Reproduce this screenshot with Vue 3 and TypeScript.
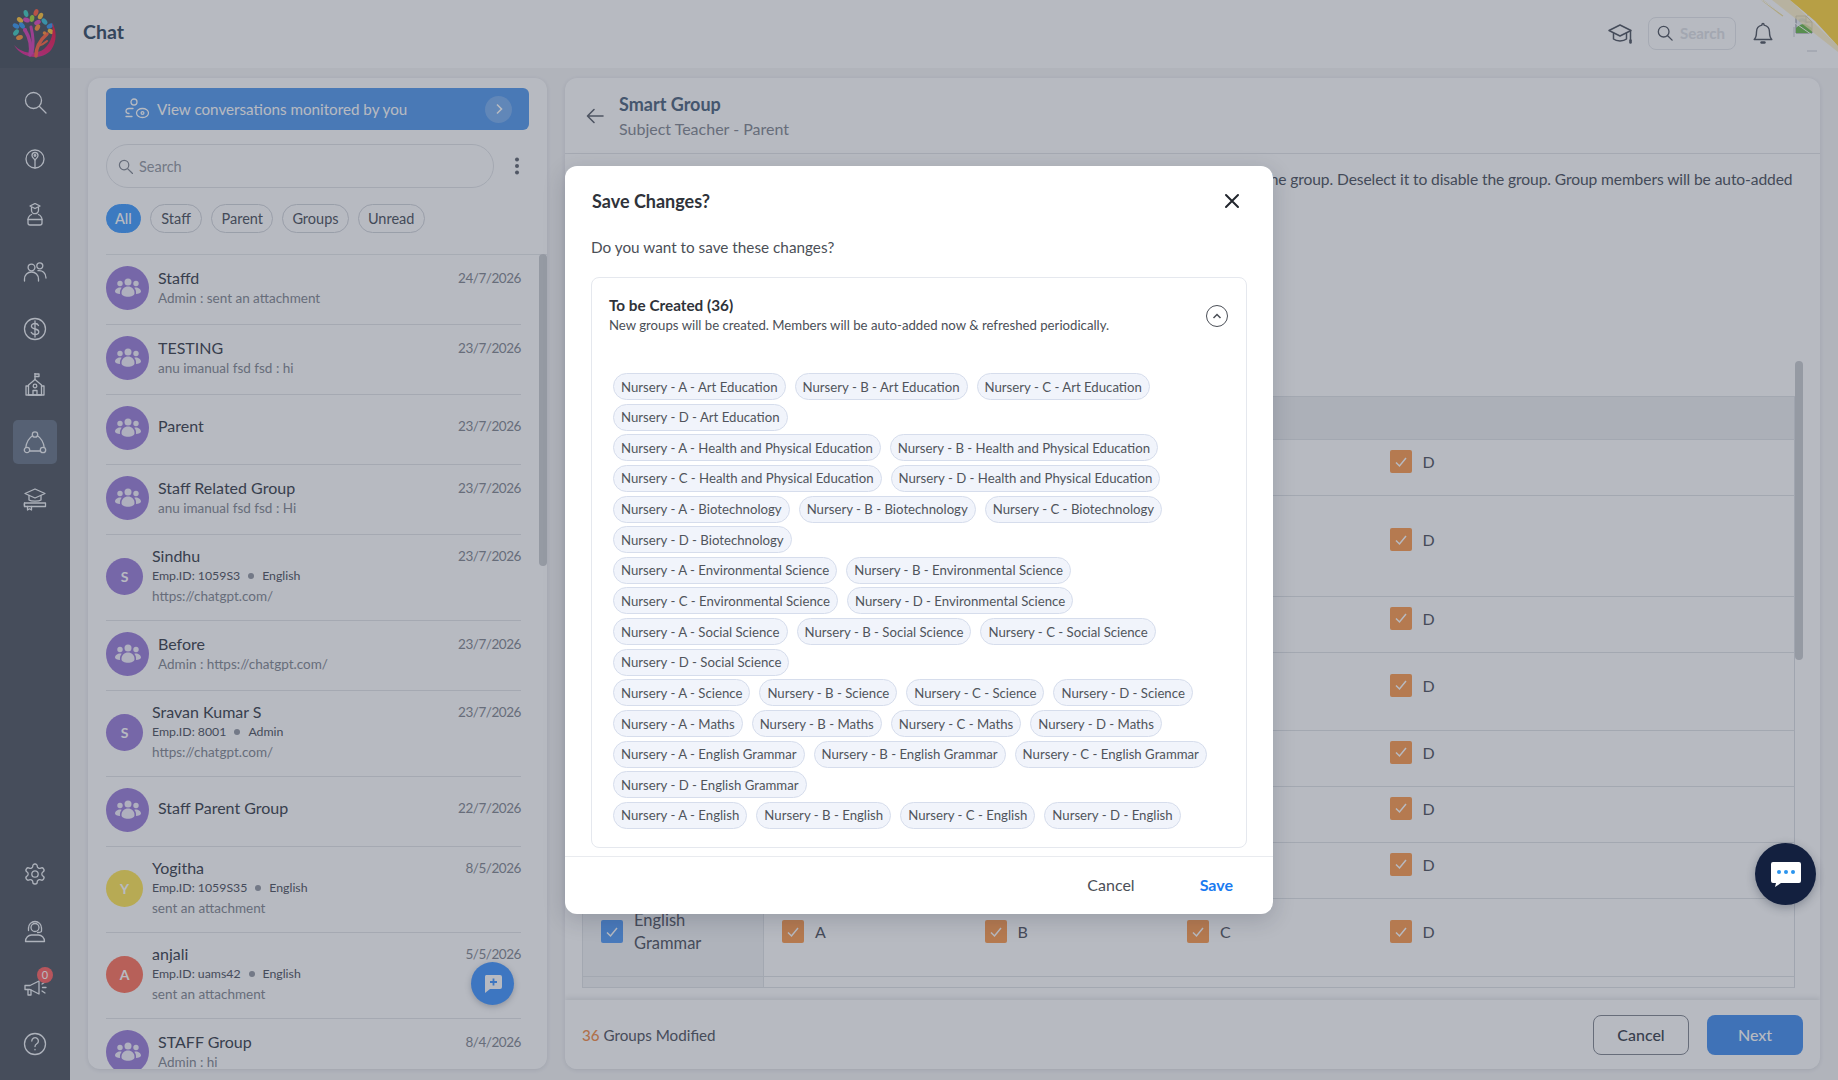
<script setup lang="ts">
const c = (x: number, y: number, r: number) => `M${x - r} ${y}a${r} ${r} 0 1 0 ${2 * r} 0a${r} ${r} 0 1 0 ${-2 * r} 0`

const topNav: { paths: string[]; active?: boolean }[] = [
  { paths: [c(10.5, 10.5, 8), 'M16.5 16.5L23 23'] },
  { paths: [c(12, 12, 9), 'M12 21V13', 'M9 8.5a3 3 0 0 1 6 0c0 2-2 3-3 4.5c-1-1.5-3-2.500-3-4.5z', c(12, 8.5, .8)] },
  { paths: ['M12 .5L17 3L12 5.500L7 3z', 'M8.5 4.500v2.700a3.500 3.500 0 0 0 7 0V4.500', 'M8.600 11.500c-2.300 1-3.600 3-3.600 5.500v3c0 1.200.8 2 2 2h10c1.200 0 2-.8 2-2v-3c0-2.500-1.300-4.500-3.600-5.500', 'M5 16.500h14'] },
  { paths: [c(8.5, 7.5, 3.4), c(16.8, 5.8, 3), 'M1.500 21v-2c0-4 3-7 7-7s7 3 7 7v2', 'M15 10.700c4.500-.6 8 2.300 8 7.300'] },
  { paths: [c(12, 12, 10.500), 'M15.500 8.500c-.6-1.300-2-2-3.500-2c-2 0-3.600 1-3.600 2.700c0 3.800 7.400 1.800 7.400 5.600c0 1.700-1.700 2.700-3.800 2.700c-1.700 0-3.200-.8-3.800-2.200', 'M12 4v16'] },
  { paths: ['M12 .5v6', 'M12 1h4v2.500h-4', 'M12 6.500l6.500 5.500v10h-13V12z', 'M3 13h2.500M18.500 13h2.500v9H3v-9', c(12, 13, 1.800), 'M10 22v-4.500h4V22'] },
  { paths: [c(12, 4.500, 2.700), c(4, 20, 2.700), c(20, 20, 2.700), 'M9.500 5.700C6 8 3.500 12 2.800 17.500', 'M14.500 5.700C18 8 20.500 12 21.200 17.500', 'M6.700 21h10.600'], active: true },
  { paths: ['M12 2L2 6.500L12 11L22 6.500z', 'M6 8.500V13c2 1.500 10 1.500 12 0V8.500', 'M1.500 16h21v3.500h-21z', 'M1.500 16c-.5 1 0 2.500 0 3.500', 'M4.500 19.500V23l2-1.200l2 1.200v-3.500'] },
]
const bottomNav: { paths: string[]; badge?: string }[] = [
  { paths: ['M12.220 2h-.44a2 2 0 0 0-2 2v.18a2 2 0 0 1-1 1.730l-.43.25a2 2 0 0 1-2 0l-.15-.08a2 2 0 0 0-2.730.73l-.22.38a2 2 0 0 0 .73 2.730l.15.1a2 2 0 0 1 1 1.720v.51a2 2 0 0 1-1 1.740l-.15.09a2 2 0 0 0-.73 2.730l.22.38a2 2 0 0 0 2.730.73l.15-.08a2 2 0 0 1 2 0l.43.25a2 2 0 0 1 1 1.730V20a2 2 0 0 0 2 2h.44a2 2 0 0 0 2-2v-.18a2 2 0 0 1 1-1.730l.43-.25a2 2 0 0 1 2 0l.15.08a2 2 0 0 0 2.730-.73l.22-.39a2 2 0 0 0-.73-2.730l-.15-.08a2 2 0 0 1-1-1.740v-.5a2 2 0 0 1 1-1.740l.15-.09a2 2 0 0 0 .73-2.730l-.22-.38a2 2 0 0 0-2.730-.73l-.15.08a2 2 0 0 1-2 0l-.43-.25a2 2 0 0 1-1-1.730V4a2 2 0 0 0-2-2z', c(12, 12, 3.200)] },
  { paths: [c(12, 8.500, 4), 'M5.500 9a6.500 6.500 0 0 1 13 0', 'M5.500 9v2.500M18.500 9v3c0 1-1 1.500-4 1.500', 'M2.500 22.500c0-4 3-6.500 6-6.500h7c3 0 6 2.500 6 6.500z'] },
  { paths: ['M2 10.500h5L16 6v13l-9-4.500H2z', 'M5 14.500V20h3v-5', 'M19 9l3-2M19.500 12.500H23M19 16l3 2'], badge: '0' },
  { paths: [c(12, 12, 10.500), 'M8.800 9a3.300 3.300 0 1 1 5 2.800c-1.100.7-1.800 1.400-1.800 2.700', 'M12 17.500v.3'] },
]

type Conv = { name: string; date: string; sub: string; kind: 'group' | 'person'; meta?: [string, string]; letter?: string; tone?: string }
const conversations: Conv[] = [
  { name: 'Staffd', date: '24/7/2026', sub: 'Admin : sent an attachment', kind: 'group' },
  { name: 'TESTING', date: '23/7/2026', sub: 'anu imanual fsd fsd : hi', kind: 'group' },
  { name: 'Parent', date: '23/7/2026', sub: '', kind: 'group' },
  { name: 'Staff Related Group', date: '23/7/2026', sub: 'anu imanual fsd fsd : Hi', kind: 'group' },
  { name: 'Sindhu', date: '23/7/2026', sub: 'https://chatgpt.com/', kind: 'person', meta: ['Emp.ID: 1059S3', 'English'], letter: 'S', tone: 'purple' },
  { name: 'Before', date: '23/7/2026', sub: 'Admin : https://chatgpt.com/', kind: 'group' },
  { name: 'Sravan Kumar S', date: '23/7/2026', sub: 'https://chatgpt.com/', kind: 'person', meta: ['Emp.ID: 8001', 'Admin'], letter: 'S', tone: 'purple' },
  { name: 'Staff Parent Group', date: '22/7/2026', sub: '', kind: 'group' },
  { name: 'Yogitha', date: '8/5/2026', sub: 'sent an attachment', kind: 'person', meta: ['Emp.ID: 1059S35', 'English'], letter: 'Y', tone: 'yellow' },
  { name: 'anjali', date: '5/5/2026', sub: 'sent an attachment', kind: 'person', meta: ['Emp.ID: uams42', 'English'], letter: 'A', tone: 'red' },
  { name: 'STAFF Group', date: '8/4/2026', sub: 'Admin : hi', kind: 'group' },
]

const filters = ['All', 'Staff', 'Parent', 'Groups', 'Unread']
const subjects = ['Art Education', 'Health and Physical Education', 'Biotechnology', 'Environmental Science', 'Social Science', 'Science', 'Maths', 'English Grammar']
const sections = ['A', 'B', 'C', 'D']

const chipSpec: [string, string][] = [
  ['Art Education', 'ABC'], ['Art Education', 'D'],
  ['Health and Physical Education', 'AB'], ['Health and Physical Education', 'CD'],
  ['Biotechnology', 'ABC'], ['Biotechnology', 'D'],
  ['Environmental Science', 'AB'], ['Environmental Science', 'CD'],
  ['Social Science', 'ABC'], ['Social Science', 'D'],
  ['Science', 'ABCD'], ['Maths', 'ABCD'],
  ['English Grammar', 'ABC'], ['English Grammar', 'D'],
  ['English', 'ABCD'],
]
const chipRows = chipSpec.map(([s, secs]) => secs.split('').map((x) => `Nursery - ${x} - ${s}`))

const leaves: [number, number, string, number][] = [
  [26, 13.500, '#4fd0c4', -15], [36, 12.500, '#ff6a50', 20], [20, 20, '#ffc94a', -50], [32, 18.500, '#a8dc4a', 10],
  [40.500, 16, '#ffc94a', 30], [26.500, 20, '#e058c0', -70], [44.500, 21.500, '#4cc4dc', -40], [37.500, 22.500, '#e058c0', 60],
  [16, 26, '#48a0f0', -60], [50, 26, '#48a0f0', 60], [22, 25.500, '#48a0f0', -40], [37.500, 27.500, '#ff9848', 30],
  [16, 32.500, '#4fd0c4', 40], [19.500, 37.500, '#ff9c48', 70], [51, 31.500, '#ffc94a', -60],
]
</script>

<template>
  <div class="app">
    <aside class="rail">
      <div class="logo">
        <svg width="70" height="68" viewBox="0 0 70 68">
          <defs>
            <linearGradient id="crescent" x1="0" y1="1" x2="1" y2="0">
              <stop offset="0" stop-color="#e040b0" />
              <stop offset="1" stop-color="#f02848" />
            </linearGradient>
          </defs>
          <ellipse v-for="(l, i) in leaves" :key="i" :cx="l[0]" :cy="l[1]" rx="2.300" ry="3.500" :fill="l[2]" :transform="`rotate(${l[3]} ${l[0]} ${l[1]})`" />
          <path d="M14 45C22 59 42 61 51 50C57 42 57 30 52 23C54 32 52 42 44 49C36 55 22 54 14 45z" fill="url(#crescent)" />
          <g fill="none" stroke-linecap="round">
            <path d="M30 55C32 45 30 38 25 30" stroke="#d850b8" stroke-width="3.500" />
            <path d="M32 53C34 44 33 35 31 27" stroke="#d850b8" stroke-width="3" />
            <path d="M36 56C36 46 40 40 47 34" stroke="#ff7050" stroke-width="3.500" />
            <path d="M38 46C41 45 44 44 47 41" stroke="#ff7050" stroke-width="2" />
          </g>
          <circle cx="25" cy="30" r="2" fill="#d850b8" />
          <circle cx="44.500" cy="33" r="1.800" fill="#ff9848" />
        </svg>
      </div>
      <nav class="rail-nav">
        <div class="rail-group">
          <div v-for="(n, i) in topNav" :key="i" class="rail-item" :class="{ active: n.active }">
            <svg width="24" height="24" viewBox="0 0 24 24" class="rail-icon"><path v-for="(d, j) in n.paths" :key="j" :d="d" /></svg>
          </div>
        </div>
        <div class="rail-group">
          <div v-for="(n, i) in bottomNav" :key="i" class="rail-item">
            <svg width="24" height="24" viewBox="0 0 24 24" class="rail-icon"><path v-for="(d, j) in n.paths" :key="j" :d="d" /></svg>
            <span v-if="n.badge" class="rail-badge">{{ n.badge }}</span>
          </div>
        </div>
      </nav>
    </aside>

    <div class="main">
      <header class="topbar">
        <h1 class="page-title">Chat</h1>
        <div class="top-tools">
          <svg width="26" height="24" viewBox="0 0 26 24" class="tool-icon">
            <path d="M13 4L2 9.500L13 15L24 9.500z" />
            <path d="M6.500 12.500V18c3 2.500 10 2.500 13 0v-5.500" />
            <path d="M23.500 10v10" />
            <path d="M23.500 19.500v2" stroke-width="2.600" />
          </svg>
          <div class="top-search">
            <svg width="16" height="16" viewBox="0 0 18 18" class="tool-icon"><circle cx="7.500" cy="7.500" r="6" /><path d="M12 12l5 5" /></svg>
            <span>Search</span>
          </div>
          <svg width="20" height="24" viewBox="0 0 20 24" class="tool-icon bell">
            <path d="M10 2.500a1 1 0 0 1 1 1v.6c3.300.6 5.500 3.300 5.500 6.900c0 4 .8 6 2.300 7.500H1.200C2.700 17 3.500 15 3.500 11c0-3.600 2.200-6.300 5.500-6.900v-.6a1 1 0 0 1 1-1z" />
            <path d="M8.500 21.500h3" stroke-width="2.400" />
          </svg>
          <svg class="avatar-slot" width="38" height="38" viewBox="0 0 38 38">
            <path d="M14 1h10M1 13v10M37 13v10M14 37h10" stroke="#cfd2d8" fill="none" />
            <g transform="translate(2 1)">
              <path d="M1 1h10l6 6v11H1z" fill="#eef1f6" stroke="#8f96a0" />
              <path d="M1 13c4-4 8-5 11-3l5 3v5H1z" fill="#78c05c" />
              <path d="M4 6c3-2 6-1 8 2" stroke="#a8c8ee" stroke-width="3" fill="none" />
              <path d="M11 1v6h6z" fill="#fff" stroke="#8f96a0" />
            </g>
          </svg>
        </div>
        <svg class="corner" width="90" height="56" viewBox="0 0 90 56">
          <path d="M24 0H42L90 46V52z" fill="#fff0c0" opacity=".75" />
          <path d="M42 0H90V46L67 21z" fill="#ffd94e" />
          <path d="M14 0L35 16" stroke="#f5e6a6" stroke-width="1.500" />
          <path d="M14 0L90 53" stroke="#fff" stroke-width="1" />
        </svg>
      </header>

      <div class="content">
        <section class="list-card">
          <div class="monitor">
            <svg width="26" height="24" viewBox="0 0 26 24" class="monitor-icon">
              <circle cx="10" cy="5" r="3" />
              <path d="M9 11.500H5c-2 0-3 1.200-3 2.500s1 2.500 3 2.500M2 19.500h6" />
              <ellipse cx="18.500" cy="16" rx="6" ry="4.500" />
              <circle cx="18.500" cy="16" r="1.400" />
            </svg>
            <span class="monitor-text">View conversations monitored by you</span>
            <span class="monitor-go">
              <svg width="10" height="12" viewBox="0 0 10 12"><path d="M3 1.500L7.500 6L3 10.500" fill="none" stroke="currentColor" stroke-width="1.600" /></svg>
            </span>
          </div>

          <div class="search-row">
            <div class="search">
              <svg width="15" height="15" viewBox="0 0 16 16" class="search-icon"><circle cx="6.500" cy="6.500" r="5" /><path d="M10.500 10.500l5 5" /></svg>
              <span>Search</span>
            </div>
            <svg width="6" height="18" viewBox="0 0 6 18" class="kebab"><circle cx="3" cy="2.500" r="2" /><circle cx="3" cy="9" r="2" /><circle cx="3" cy="15.500" r="2" /></svg>
          </div>

          <div class="filters">
            <span v-for="(f, i) in filters" :key="f" class="filter" :class="{ on: i === 0 }">{{ f }}</span>
          </div>

          <div class="list">
            <div v-for="(cv, i) in conversations" :key="i" class="row" :class="[cv.kind, { solo: !cv.sub }]">
              <div class="avatar" :class="cv.tone ?? 'purple'">
                <svg v-if="cv.kind === 'group'" width="26" height="22" viewBox="0 0 26 22" class="group-icon">
                  <circle cx="13" cy="5" r="3.500" />
                  <circle cx="5" cy="6.500" r="2.700" />
                  <circle cx="21" cy="6.500" r="2.700" />
                  <path d="M6.500 16c0-4 3-6.500 6.500-6.500s6.500 2.500 6.500 6.500c0 2.500-3 3.800-6.500 3.800S6.500 18.500 6.500 16z" />
                  <path d="M5.200 10.500C2.500 10.500 0 12.300 0 14.500c0 1.500 2.500 2.500 5 2.500c-.2-2.500 0-4.500 1.700-6.300c-.5-.1-1-.2-1.500-.2z" />
                  <path d="M20.800 10.500c2.700 0 5.200 1.800 5.200 4c0 1.500-2.500 2.500-5 2.500c.2-2.500 0-4.500-1.700-6.300c.5-.1 1-.2 1.500-.2z" />
                </svg>
                <span v-else>{{ cv.letter }}</span>
              </div>
              <div class="row-body">
                <div class="row-top">
                  <span class="row-name">{{ cv.name }}</span>
                  <span class="row-date">{{ cv.date }}</span>
                </div>
                <div v-if="cv.meta" class="row-meta">
                  <span>{{ cv.meta[0] }}</span><i class="dot"></i><span>{{ cv.meta[1] }}</span>
                </div>
                <div v-if="cv.sub" class="row-sub">{{ cv.sub }}</div>
              </div>
            </div>
            <span class="thumb list-thumb"></span>
          </div>

          <button class="fab" type="button">
            <svg width="20" height="20" viewBox="0 0 20 20">
              <path d="M3 1h14a2 2 0 0 1 2 2v10a2 2 0 0 1-2 2H7l-5 4V3a2 2 0 0 1 1-2z" fill="#fff" />
              <path d="M10.500 4.500v7M7 8h7" stroke="#519eff" stroke-width="1.800" />
            </svg>
          </button>
        </section>

        <section class="detail-card">
          <div class="detail-head">
            <svg width="20" height="18" viewBox="0 0 20 18" class="back"><path d="M18 9H3M9 2.500L2.500 9L9 15.500" /></svg>
            <div>
              <div class="detail-title">Smart Group</div>
              <div class="detail-sub">Subject Teacher - Parent</div>
            </div>
          </div>
          <p class="desc">Select any subject and the sections listed in the tables below to enable the matching groups and keep the group. Deselect it to disable the group. Group members will be auto-added<br />now and refreshed periodically.</p>

          <div class="matrix">
            <div class="matrix-head">
              <div class="cell-subject">Subject</div>
              <div class="cell-sections">Sections</div>
            </div>
            <div v-for="s in subjects" :key="s" class="matrix-row">
              <div class="cell-subject">
                <span class="check blue"><svg width="16" height="16" viewBox="0 0 16 16"><path d="M3 8.500L6.500 12L13 4" /></svg></span>
                <span class="subject-name">{{ s }}</span>
              </div>
              <div class="cell-sections">
                <div v-for="x in sections" :key="x" class="section">
                  <span class="check orange"><svg width="16" height="16" viewBox="0 0 16 16"><path d="M3 8.500L6.500 12L13 4" /></svg></span>
                  <span>{{ x }}</span>
                </div>
              </div>
            </div>
            <div class="matrix-row tail">
              <div class="cell-subject"></div>
              <div class="cell-sections"></div>
            </div>
            <span class="thumb matrix-thumb"></span>
          </div>

          <div class="detail-foot">
            <div class="modified"><b>36</b> Groups Modified</div>
            <div class="foot-btns">
              <button class="btn ghost" type="button">Cancel</button>
              <button class="btn solid" type="button">Next</button>
            </div>
          </div>
        </section>
      </div>
    </div>

    <div class="scrim">
      <div class="modal">
        <div class="modal-head">
          <h2>Save Changes?</h2>
          <svg width="16" height="16" viewBox="0 0 16 16" class="close"><path d="M2 2l12 12M14 2L2 14" /></svg>
        </div>
        <p class="modal-q">Do you want to save these changes?</p>
        <div class="created">
          <div class="created-head">
            <div>
              <div class="created-title">To be Created (36)</div>
              <div class="created-sub">New groups will be created. Members will be auto-added now &amp; refreshed periodically.</div>
            </div>
            <span class="collapse">
              <svg width="10" height="8" viewBox="0 0 10 8"><path d="M1.500 6L5 2.500L8.500 6" /></svg>
            </span>
          </div>
          <div class="chips">
            <div v-for="(r, i) in chipRows" :key="i" class="chip-row">
              <span v-for="t in r" :key="t" class="chip">{{ t }}</span>
            </div>
          </div>
        </div>
        <div class="modal-foot">
          <button class="link" type="button">Cancel</button>
          <button class="link primary" type="button">Save</button>
        </div>
      </div>
    </div>

    <button class="helper" type="button">
      <svg width="32" height="27" viewBox="0 0 32 27">
        <path d="M3 1h26a2 2 0 0 1 2 2v17a2 2 0 0 1-2 2H11l-6 4l1-4H3a2 2 0 0 1-2-2V3a2 2 0 0 1 2-2z" fill="#fff" />
        <circle cx="9" cy="11" r="2" fill="#2b94ee" />
        <circle cx="16" cy="11" r="2" fill="#2b94ee" />
        <circle cx="23" cy="11" r="2" fill="#2b94ee" />
      </svg>
    </button>
  </div>
</template>

<style>
html, body { margin: 0; padding: 0; }
</style>

<style scoped>
* { box-sizing: border-box; }
.app {
  position: relative;
  display: flex;
  width: 1838px;
  height: 1080px;
  overflow: hidden;
  background: #f6f6f7;
  font-family: "Lato", "Noto Sans", sans-serif;
  color: #4a4f5a;
}
button { font-family: inherit; }

.rail { width: 70px; flex: none; display: flex; flex-direction: column; background: #5d646e; }
.logo { height: 68px; flex: none; background: #575e68; }
.logo svg { display: block; }
.rail-nav { flex: 1; display: flex; flex-direction: column; justify-content: space-between; padding: 12px 0 14px; }
.rail-group { display: flex; flex-direction: column; gap: 12.700px; align-items: center; }
.rail-item { position: relative; width: 44px; height: 44px; display: flex; align-items: center; justify-content: center; border-radius: 5px; }
.rail-item.active { background: #748091; }
.rail-icon { fill: none; stroke: #f2f4f7; stroke-width: 1.300; stroke-linecap: round; stroke-linejoin: round; }
.rail-badge {
  position: absolute; top: 2px; right: 4px; width: 16px; height: 16px; border-radius: 50%;
  background: #ff6f6f; color: #fff; font-size: 11px; line-height: 16px; text-align: center;
}

.main { flex: 1; min-width: 0; display: flex; flex-direction: column; }
.topbar { position: relative; height: 68px; flex: none; display: flex; align-items: center; justify-content: space-between; background: #fff; padding: 0 7px 0 13px; }
.page-title { margin: 0 0 6px; font-size: 19.500px; font-weight: 700; color: #45596f; }
.top-tools { display: flex; align-items: center; margin-bottom: 2px; }
.tool-icon { fill: none; stroke: #5e636d; stroke-width: 1.500; stroke-linecap: round; stroke-linejoin: round; }
.top-search {
  width: 88px; height: 33px; margin-left: 15px; display: flex; align-items: center; gap: 7px; padding: 0 8px;
  border: 1px solid #e7e9ec; border-radius: 8px; color: #e2e4e8; font-size: 15px; font-weight: 700;
}
.bell { margin-left: 17px; stroke-width: 1.400; }
.avatar-slot { margin-left: 20px; display: block; }
.corner { position: absolute; top: 0; right: 0; }

.content { flex: 1; min-height: 0; display: flex; gap: 18px; padding: 10px 18px 11px; }

.list-card {
  position: relative; width: 459px; flex: none; display: flex; flex-direction: column; padding: 10px 0 0 18px;
  background: #fff; border-radius: 12px; overflow: hidden; box-shadow: 0 1px 4px rgba(20, 30, 50, .1);
}
.monitor {
  width: 423px; height: 42px; flex: none; display: flex; align-items: center; padding: 0 17px 0 18px;
  background: #62a2ef; border-radius: 6px; color: #fff;
}
.monitor-icon { fill: none; stroke: #fff; stroke-width: 1.300; stroke-linecap: round; }
.monitor-text { flex: 1; margin-left: 7px; font-size: 15.200px; }
.monitor-go { width: 27px; height: 27px; display: flex; align-items: center; justify-content: center; border-radius: 50%; background: rgba(255, 255, 255, .22); }

.search-row { display: flex; align-items: center; margin-top: 14px; height: 44px; flex: none; }
.search {
  width: 388px; height: 44px; display: flex; align-items: center; gap: 6px; padding: 0 0 0 11px;
  border: 1px solid #e4e6e9; border-radius: 22px; color: #9ca1a9; font-size: 14.500px;
}
.search-icon { fill: none; stroke: #8c919a; stroke-width: 1.300; stroke-linecap: round; }
.kebab { margin-left: 20px; fill: #6d727c; }

.filters { display: flex; gap: 9px; margin-top: 16px; flex: none; }
.filter {
  height: 29px; padding: 0 9.200px; display: flex; align-items: center; border: 1px solid #d5d8dd; border-radius: 15px;
  font-size: 14.500px; color: #5a5f6a;
}
.filter:nth-child(2) { padding: 0 10.500px; }
.filter.on { padding: 0 8px; background: #50a4ff; border-color: #50a4ff; color: #fff; font-weight: 500; }

.list { position: relative; flex: 1; min-height: 0; margin-top: 21px; border-top: 1px solid #e9ebed; padding-right: 26px; }
.row { display: flex; align-items: center; border-bottom: 1px solid #e5e7ea; }
.row.group { height: 70px; }
.row.person { height: 86px; }
.avatar { flex: none; display: flex; align-items: center; justify-content: center; border-radius: 50%; color: #fff; font-weight: 700; font-size: 14px; }
.group .avatar { width: 43px; height: 44px; margin-top: -3px; }
.person .avatar { width: 37px; height: 37px; margin-top: -2px; }
.purple { background: #a388dc; }
.yellow { background: #ffe864; }
.red { background: #ff7f6b; }
.group-icon { fill: #f4f1fb; }
.row-body { flex: 1; min-width: 0; padding-left: 9px; margin-top: -4px; }
.row.solo .row-body { margin-top: -8px; }
.row-top { display: flex; justify-content: space-between; align-items: center; }
.row-name { font-size: 16px; line-height: 21px; color: #4a4f5a; }
.row-date { font-size: 13.500px; letter-spacing: -.45px; color: #8d919a; }
.row-meta { display: flex; align-items: center; font-size: 12.300px; line-height: 20px; color: #5c616c; }
.dot { width: 6px; height: 6px; margin: 0 8px; border-radius: 50%; background: #9ea2ac; }
.row-sub { font-size: 13.500px; line-height: 20px; color: #8d919a; }

.thumb { position: absolute; width: 8px; border-radius: 4px; background: #cfd1d5; }
.list-thumb { top: -1px; right: 0; height: 312px; }
.fab {
  position: absolute; left: 383px; top: 884px; width: 43px; height: 43px; padding: 0; display: flex; align-items: center; justify-content: center;
  border: none; border-radius: 50%; background: #519eff; box-shadow: 0 2px 6px rgba(20, 30, 50, .25);
}

.detail-card { position: relative; flex: 1; min-width: 0; display: flex; flex-direction: column; background: #fff; border-radius: 12px; overflow: hidden; box-shadow: 0 1px 4px rgba(20, 30, 50, .1); }
.detail-head { height: 76px; flex: none; display: flex; align-items: center; gap: 14px; padding: 0 20px; border-bottom: 1px solid #e5e7ea; }
.back { fill: none; stroke: #6a6f79; stroke-width: 1.600; stroke-linecap: round; stroke-linejoin: round; }
.detail-title { font-size: 18px; line-height: 26px; font-weight: 700; color: #5b7088; }
.detail-sub { font-size: 16px; line-height: 24px; color: #8d919a; }
.desc { margin: 14px 8px 0 16px; height: 46px; flex: none; font-size: 15.600px; letter-spacing: -.1px; line-height: 23px; color: #5a5f6a; overflow: hidden; white-space: nowrap; }

.matrix { position: relative; flex: 1; min-height: 0; margin: 147px 0 0 17px; padding-top: 35px; overflow: hidden; }
.matrix-head, .matrix-row { display: flex; width: 1213px; border-right: 1px solid #dfe1e5; }
.matrix-head { height: 44px; background: #f0f1f3; border-top: 1px solid #e3e5e8; border-bottom: 1px solid #e3e5e8; font-size: 15px; }
.matrix-head > div { display: flex; align-items: center; padding: 0 18px; background: none; }
.matrix-row { border-bottom: 1px solid #e3e5e8; }
.cell-subject { width: 182px; flex: none; display: flex; align-items: center; gap: 11px; padding: 10px 22px 22px 18px; background: #f4f5f6; border-left: 1px solid #e3e5e8; border-right: 1px solid #e3e5e8; }
.subject-name { font-size: 16.500px; line-height: 22.600px; color: #5d626c; }
.cell-sections { flex: 1; display: flex; align-items: center; padding: 10px 0 22px 18px; }
.section { width: 202.500px; display: flex; align-items: center; gap: 11px; font-size: 16px; color: #5d626c; }
.check { flex: none; width: 22px; height: 23px; display: flex; align-items: center; justify-content: center; border-radius: 2px; }
.check svg { fill: none; stroke: #fff; stroke-width: 1.500; }
.check.blue { background: #62a4f6; }
.check.orange { background: #fda45e; }
.tail .cell-subject, .tail .cell-sections { padding: 0; height: 10px; }
.matrix-thumb { top: 0; right: 17.500px; height: 299px; }

.detail-foot { height: 69px; flex: none; display: flex; align-items: center; justify-content: space-between; padding: 0 17px; margin-top: 12px; background: #fff; box-shadow: 0 -2px 5px rgba(20, 30, 50, .1); }
.modified { font-size: 15.200px; color: #5d626c; }
.modified b { font-weight: 500; color: #f59556; }
.foot-btns { display: flex; gap: 18px; }
.btn { width: 96px; height: 40px; border-radius: 8px; font-size: 16px; font-weight: 500; padding: 0; }
.btn.ghost { background: #fff; border: 1px solid #8d919a; color: #4a4f5a; }
.btn.solid { background: #5398f1; border: none; color: #fff; }

.scrim { position: absolute; inset: 0; display: flex; align-items: center; justify-content: center; background: rgba(17, 25, 50, .3); }
.modal { width: 708px; height: 748px; display: flex; flex-direction: column; background: #fff; border-radius: 12px; color: #3f434b; box-shadow: 0 6px 22px rgba(20, 30, 50, .18); }
.modal-head { display: flex; align-items: center; justify-content: space-between; padding: 23px 33px 0 27px; }
.modal-head h2 { margin: 0; font-size: 18px; line-height: 24px; font-weight: 700; color: #2f333a; }
.close { fill: none; stroke: #22262d; stroke-width: 2; stroke-linecap: round; }
.modal-q { margin: 23px 26px 0; font-size: 15.300px; line-height: 22px; color: #4b4f57; }
.created { margin: 19px 26px 0; height: 571px; border: 1px solid #e5e8ee; border-radius: 8px; padding: 17px 17px 0 17px; flex: none; }
.created-head { display: flex; justify-content: space-between; align-items: center; padding-right: 1px; }
.created-title { font-size: 15.300px; line-height: 20px; font-weight: 700; color: #2f333a; }
.created-sub { font-size: 13.200px; line-height: 21px; color: #4b4f57; }
.collapse { width: 22px; height: 22px; display: flex; align-items: center; justify-content: center; border: 1px solid #4b4f57; border-radius: 50%; }
.collapse svg { fill: none; stroke: #4b4f57; stroke-width: 1.500; }
.chips { display: flex; flex-direction: column; gap: 3.650px; margin-top: 37px; padding-left: 4px; }
.chip-row { display: flex; gap: 9px; }
.chip { height: 27px; padding: 0 7px; display: flex; align-items: center; background: #f1f4fb; border: 1px solid #d6ddec; border-radius: 14px; font-size: 13.200px; color: #50545c; white-space: nowrap; }
.modal-foot { flex: 1; margin-top: 8px; display: flex; align-items: center; justify-content: flex-end; gap: 65px; padding: 0 40px 2px 0; border-top: 1px solid #e9ebef; }
.link { background: none; border: none; padding: 0; font-size: 16px; color: #4b4f57; }
.link.primary { color: #1a7af0; font-weight: 700; }

.helper {
  position: absolute; left: 1755px; top: 843px; width: 61px; height: 62px; padding: 0; display: flex; align-items: center; justify-content: center;
  border: none; border-radius: 50%; background: #13203f; box-shadow: 0 3px 10px rgba(20, 30, 50, .3);
}
</style>
